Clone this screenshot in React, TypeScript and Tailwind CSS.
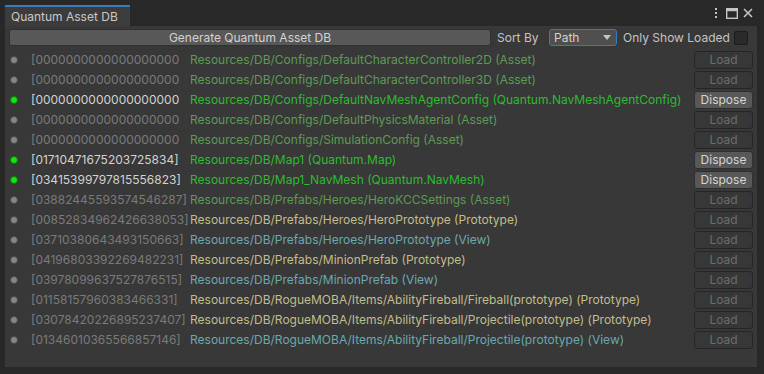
import React from 'react';

type Kind = 'asset' | 'proto' | 'view';

interface Row {
  id: string;
  path: string;
  kind: Kind;
  loaded: boolean;
}

const ZERO = '[0000000000000000000';

const rows: Row[] = [
  { id: ZERO, path: 'Resources/DB/Configs/DefaultCharacterController2D (Asset)', kind: 'asset', loaded: false },
  { id: ZERO, path: 'Resources/DB/Configs/DefaultCharacterController3D (Asset)', kind: 'asset', loaded: false },
  { id: ZERO, path: 'Resources/DB/Configs/DefaultNavMeshAgentConfig (Quantum.NavMeshAgentConfig)', kind: 'asset', loaded: true },
  { id: ZERO, path: 'Resources/DB/Configs/DefaultPhysicsMaterial (Asset)', kind: 'asset', loaded: false },
  { id: ZERO, path: 'Resources/DB/Configs/SimulationConfig (Asset)', kind: 'asset', loaded: false },
  { id: '[01710471675203725834]', path: 'Resources/DB/Map1 (Quantum.Map)', kind: 'asset', loaded: true },
  { id: '[03415399797815556823]', path: 'Resources/DB/Map1_NavMesh (Quantum.NavMesh)', kind: 'asset', loaded: true },
  { id: '[03882445593574546287]', path: 'Resources/DB/Prefabs/Heroes/HeroKCCSettings (Asset)', kind: 'asset', loaded: false },
  { id: '[00852834962426638053]', path: 'Resources/DB/Prefabs/Heroes/HeroPrototype (Prototype)', kind: 'proto', loaded: false },
  { id: '[03710380643493150663]', path: 'Resources/DB/Prefabs/Heroes/HeroPrototype (View)', kind: 'view', loaded: false },
  { id: '[04196803392269482231]', path: 'Resources/DB/Prefabs/MinionPrefab (Prototype)', kind: 'proto', loaded: false },
  { id: '[03978099637527876515]', path: 'Resources/DB/Prefabs/MinionPrefab (View)', kind: 'view', loaded: false },
  { id: '[01158157960383466331]', path: 'Resources/DB/RogueMOBA/Items/AbilityFireball/Fireball(prototype) (Prototype)', kind: 'proto', loaded: false },
  { id: '[03078420226895237407]', path: 'Resources/DB/RogueMOBA/Items/AbilityFireball/Projectile(prototype) (Prototype)', kind: 'proto', loaded: false },
  { id: '[01346010365566857146]', path: 'Resources/DB/RogueMOBA/Items/AbilityFireball/Projectile(prototype) (View)', kind: 'view', loaded: false },
];

const pathColor = (r: Row) => {
  if (r.kind === 'proto') return 'text-[#c2bd8b]';
  if (r.kind === 'view') return 'text-[#6aa9ad]';
  return r.loaded ? 'text-[#2fbb2f]' : 'text-[#5e9a55]';
};

const AssetRow: React.FC<{ row: Row }> = ({ row }) => (
  <div className="h-[20px] flex items-center">
    <div className="w-[26px] pl-[5px] flex items-center">
      <div
        className={
          row.loaded
            ? 'w-[8px] h-[8px] rounded-full bg-[#10e810] border border-[#0a7a0a]'
            : 'w-[8px] h-[8px] rounded-full bg-[#878787] border border-[#4a4a4a]'
        }
      />
    </div>
    <div className={`w-[159px] overflow-hidden whitespace-nowrap ${row.loaded ? 'text-[#d2d2d2]' : 'text-[#7a7a7a]'}`}>
      {row.id}
    </div>
    <div className={`flex-1 whitespace-nowrap overflow-hidden ${pathColor(row)}`}>{row.path}</div>
    {row.loaded ? (
      <button className="w-[59px] h-[18px] rounded-[3px] bg-[#585858] border border-[#303030] text-[#d4d4d4] leading-none mr-[4px]">
        Dispose
      </button>
    ) : (
      <button className="w-[59px] h-[18px] rounded-[3px] bg-[#373737] border border-[#252525] text-[#6c6c6c] leading-none mr-[4px]">
        Load
      </button>
    )}
  </div>
);

export default function App() {
  return (
    <div className="w-[764px] h-[374px] bg-[#282828] pl-[5px] pr-[7px] flex flex-col text-[12px] font-['Inter',sans-serif]">
      <div className="h-[26px] flex items-end justify-between shrink-0">
        <div className="h-[21px] w-[125px] bg-[#3c3c3c] border-t-2 border-[#3a79bb] pl-[6px] flex items-center text-[#c8c8c8]">
          Quantum Asset DB
        </div>
        <div className="h-[26px] flex items-center gap-[5px] pr-[4px] text-[#c4c4c4]">
          <svg width="4" height="12" viewBox="0 0 4 12">
            <rect x="1" y="1" width="2" height="2" fill="#c4c4c4" />
            <rect x="1" y="5" width="2" height="2" fill="#c4c4c4" />
            <rect x="1" y="9" width="2" height="2" fill="#c4c4c4" />
          </svg>
          <svg width="12" height="11" viewBox="0 0 12 11" className="ml-[3px]">
            <rect x="0.7" y="0.7" width="10.6" height="9.6" fill="none" stroke="#c4c4c4" strokeWidth="1.4" />
            <rect x="0.7" y="0.7" width="10.6" height="2.5" fill="#c4c4c4" />
          </svg>
          <svg width="10" height="10" viewBox="0 0 10 10">
            <path d="M1 1 L9 9 M9 1 L1 9" stroke="#c4c4c4" strokeWidth="1.6" />
          </svg>
        </div>
      </div>
      <div className="h-[341px] bg-[#383838] shrink-0 flex flex-col">
        <div className="h-[19px] mt-[2px] flex items-center pl-[4px] pr-[9px] text-[#c4c4c4]">
          <button className="w-[482px] h-[17px] rounded-[3px] bg-[#585858] border border-[#303030] text-[#d2d2d2] leading-none">
            Generate Quantum Asset DB
          </button>
          <div className="w-[58px] pl-[6px]">Sort By</div>
          <div className="w-[68px] h-[17px] rounded-[3px] bg-[#4f4f4f] border border-[#3a79bb] flex items-center justify-between pl-[4px] pr-[5px] text-[#d2d2d2]">
            <span>Path</span>
            <svg width="8" height="5" viewBox="0 0 8 5">
              <path d="M0 0 L8 0 L4 5 Z" fill="#c4c4c4" />
            </svg>
          </div>
          <div className="flex-1 pl-[6px]">Only Show Loaded</div>
          <div className="w-[14px] h-[14px] rounded-[2px] bg-[#2a2a2a] border border-[#1c1c1c]" />
        </div>
        <div className="mt-[3px] flex flex-col">
          {rows.map((r, i) => (
            <AssetRow key={i} row={r} />
          ))}
        </div>
      </div>
    </div>
  );
}
